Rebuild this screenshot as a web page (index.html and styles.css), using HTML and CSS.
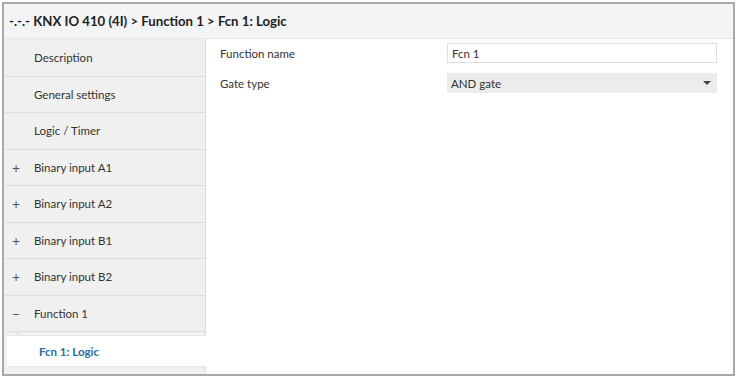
FILE: index.html
```html
<!DOCTYPE html>
<html lang="en">
<head>
    <meta charset="UTF-8">
    <title>Fcn 1: Logic</title>
    <link rel="stylesheet" href="styles.css">
</head>
<body>
    <div class="window">
        <div class="header">-.-.- KNX IO 410 (4I) &gt; Function 1 &gt; Fcn 1: Logic</div>

        <div class="main">
            <ul class="sidebar">
                <li class="item"><span class="toggle"></span>Description</li>
                <li class="item"><span class="toggle"></span>General settings</li>
                <li class="item"><span class="toggle"></span>Logic / Timer</li>
                <li class="item"><span class="toggle">+</span>Binary input A1</li>
                <li class="item"><span class="toggle">+</span>Binary input A2</li>
                <li class="item"><span class="toggle">+</span>Binary input B1</li>
                <li class="item"><span class="toggle">+</span>Binary input B2</li>
                <li class="item open"><span class="toggle">&minus;</span>Function 1</li>
                <li class="item sub active">Fcn 1: Logic</li>
            </ul>

            <div class="content">
                <div class="form-row">
                    <label for="fname">Function name</label>
                    <input type="text" id="fname" value="Fcn 1">
                </div>
                <div class="form-row">
                    <label>Gate type</label>
                    <div class="select">
                        <span>AND gate</span>
                        <span class="caret"></span>
                    </div>
                </div>
            </div>
        </div>
    </div>
</body>
</html>
```

FILE: styles.css
```css
:root {
    --frame: #a9a9a9;
    --header-bg: #f2f4f6;
    --side-bg: #f0f0f0;
    --line: #dcdcdc;
    --text: #333;
    --blue: #2b6ca3;
}

* {
    box-sizing: border-box;
}

body {
    margin: 0;
    background: #fff;
    font-family: 'Lato', 'Liberation Sans', sans-serif;
    font-size: 11.5px;
    color: var(--text);
}

.window {
    margin: 2px 3px 3px 2px;
    height: calc(100vh - 5px);
    border: 2px solid var(--frame);
    display: flex;
    flex-direction: column;
    overflow: hidden;
}

.header {
    height: 35px;
    flex: none;
    display: flex;
    align-items: center;
    padding-left: 5px;
    background: var(--header-bg);
    border-bottom: 1px solid #e4e6e8;
    font-size: 13.2px;
    font-weight: 700;
    color: #222;
}

.main {
    flex: 1;
    display: flex;
    min-height: 0;
}

.sidebar {
    list-style: none;
    margin: 0;
    padding: 1px 0 0;
    width: 202px;
    flex: none;
    background: var(--side-bg);
    border-right: 1px solid var(--line);
    position: relative;
}

.item {
    height: 36.5px;
    display: flex;
    align-items: center;
    border-bottom: 1px solid var(--line);
    margin-left: 1px;
}

.toggle {
    width: 29px;
    padding-left: 7px;
    font-size: 14px;
    color: #555;
}

.item.open {
    position: relative;
}

/* little notch pointing at the selected child */
.item.open::after {
    content: '';
    position: absolute;
    left: 9px;
    bottom: -4px;
    border-left: 4px solid transparent;
    border-right: 4px solid transparent;
    border-top: 4px solid #e2e2e2;
}

.item.sub {
    height: 32px;
    margin: 3px -1px 0 3px;
    padding-left: 32px;
    background: #fff;
    border-top: 1px solid #e6e6e6;
    border-bottom: 1px solid #e6e6e6;
    position: relative;
}

.item.active {
    color: var(--blue);
    font-weight: 700;
}

.content {
    flex: 1;
    padding: 4px 0 0 14px;
    background: #fff;
}

.form-row {
    display: grid;
    grid-template-columns: 227px 270px;
    align-items: center;
    margin-bottom: 10px;
}

.form-row input {
    height: 20px;
    border: 1px solid #dedede;
    padding: 0 4px;
    font: inherit;
    color: var(--text);
    outline: none;
}

.select {
    height: 20px;
    display: flex;
    align-items: center;
    justify-content: space-between;
    padding: 0 6px 0 4px;
    background: #ececec;
}

.caret {
    border-left: 4px solid transparent;
    border-right: 4px solid transparent;
    border-top: 4px solid #444;
}
```
